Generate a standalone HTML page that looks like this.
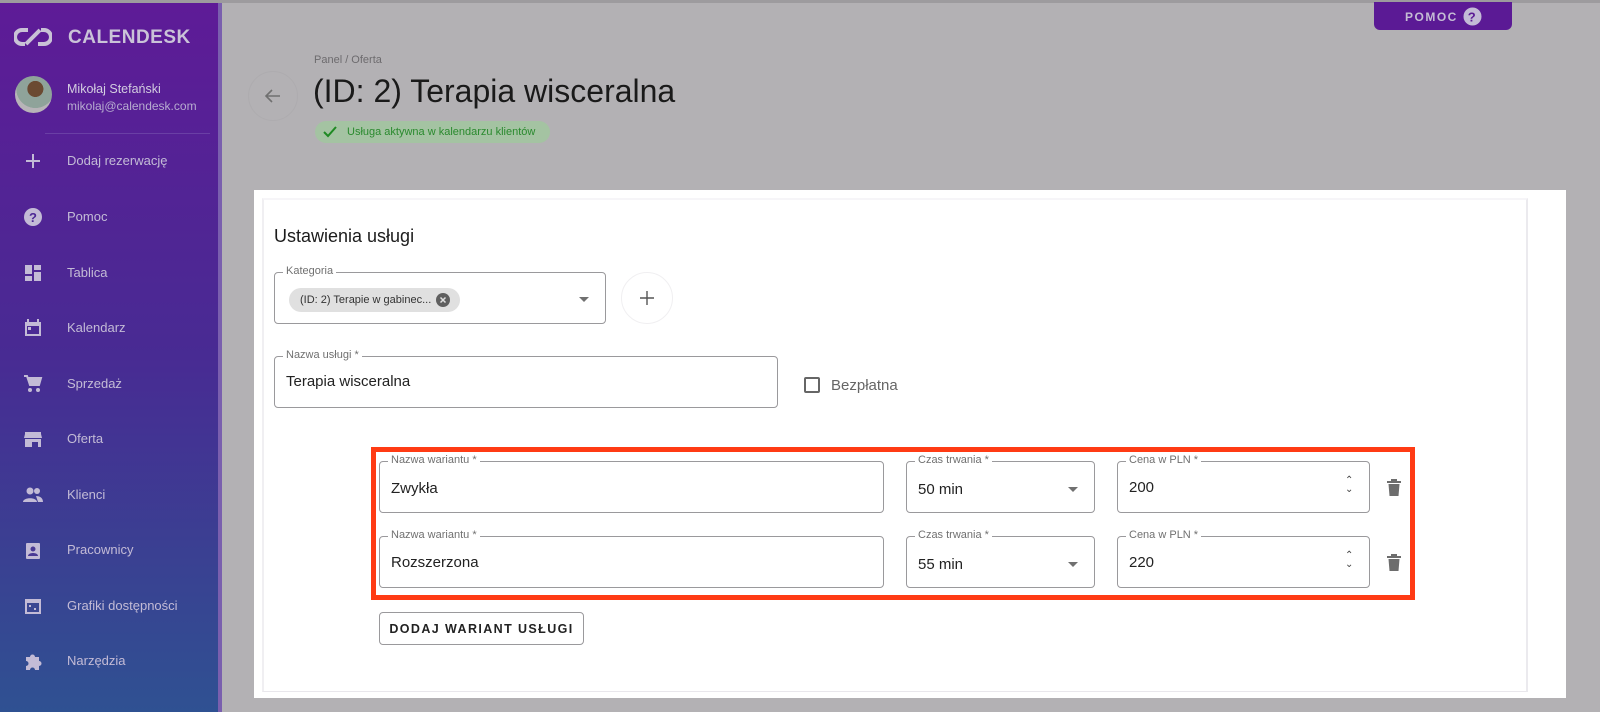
<!DOCTYPE html>
<html><head><meta charset="utf-8"><style>
*{box-sizing:border-box;margin:0;padding:0}
body{width:1600px;height:712px;overflow:hidden;background:#b3b1b4;font-family:"Liberation Sans",sans-serif;position:relative}
.abs{position:absolute}
.side{left:0;top:3px;width:222px;height:709px;background:linear-gradient(180deg,#5e1b97 0%,#482b93 50%,#2f5192 100%);border-right:4px solid #7a5fae}
.mi{position:absolute;left:0;width:220px;height:40px;color:#c3bbd6;font-size:13px}
.mi span{position:absolute;left:67px;top:12px}
.mi svg{position:absolute;left:23px;top:10px}
.f{position:absolute;border:1px solid #9a999c;border-radius:4px;background:#fff}
.f .l{position:absolute;top:-8px;left:8px;background:#fff;padding:0 3px;font-size:11px;color:#707070}
.f .v{position:absolute;left:11px;font-size:15px;color:#222}
.arr{position:absolute;width:0;height:0;border-left:5px solid transparent;border-right:5px solid transparent;border-top:5px solid #707070}
</style></head><body>
<div class="abs" style="left:0;top:0;width:1600px;height:3px;background:#9d9b9e"></div>
<div class="abs side">
 <svg class="abs" style="left:14px;top:24px" width="38" height="20" viewBox="0 0 38 20"><path d="M14 3H8a7 7 0 0 0 0 14h3M24 17h6a7 7 0 0 0 0-14h-3M12 17L26 3" fill="none" stroke="#c9c2d6" stroke-width="4"/></svg>
 <div class="abs" style="left:68px;top:24px;font-size:19px;font-weight:bold;color:#cac3d8;letter-spacing:0.5px">CALENDESK</div>
 <div class="abs" style="left:15px;top:73px;width:37px;height:37px;border-radius:50%;background:radial-gradient(circle at 55% 35%,#6b4a32 0 25%,#8fa39a 26% 60%,#b8b4b8 61%)"></div>
 <div class="abs" style="left:67px;top:79px;font-size:12.5px;color:#d3cde0">Mikołaj Stefański</div>
 <div class="abs" style="left:67px;top:96px;font-size:12px;color:#b7acd0">mikolaj@calendesk.com</div>
 <div class="abs" style="left:45px;top:130px;width:165px;height:1px;background:#6a3fa5"></div>
 <div class="mi" style="top:138px"><svg width="20" height="20"><path d="M10 3v14M3 10h14" stroke="#c3bbd6" stroke-width="2"/></svg><span>Dodaj rezerwację</span></div>
 <div class="mi" style="top:194px"><svg width="20" height="20"><circle cx="10" cy="10" r="9" fill="#c3bbd6"/><text x="10" y="15" font-size="13" font-weight="bold" text-anchor="middle" fill="#4c2895" font-family="Liberation Sans">?</text></svg><span>Pomoc</span></div>
 <div class="mi" style="top:250px"><svg width="20" height="20"><path d="M2 2h7v9H2zM11 2h7v5h-7zM11 9h7v9h-7zM2 13h7v5H2z" fill="#c3bbd6"/></svg><span>Tablica</span></div>
 <div class="mi" style="top:305px"><svg width="20" height="20"><path d="M2 4h16v14H2z" fill="#c3bbd6"/><path d="M5 1v4M15 1v4" stroke="#c3bbd6" stroke-width="2"/><path d="M4 8h12v8H4z" fill="#4a2a94"/><rect x="5" y="9" width="3" height="3" fill="#c3bbd6"/></svg><span>Kalendarz</span></div>
 <div class="mi" style="top:361px"><svg width="20" height="20"><path d="M1 2h3l3 9h9l2-7H5" fill="none" stroke="#c3bbd6" stroke-width="2"/><path d="M5 4h13l-2 7H7z" fill="#c3bbd6"/><circle cx="7" cy="16" r="2" fill="#c3bbd6"/><circle cx="15" cy="16" r="2" fill="#c3bbd6"/></svg><span>Sprzedaż</span></div>
 <div class="mi" style="top:416px"><svg width="20" height="20"><path d="M2 3h16v2l1 4H1l1-4zM2 10h16v8h-3v-5H9v5H2z" fill="#c3bbd6"/></svg><span>Oferta</span></div>
 <div class="mi" style="top:472px"><svg width="20" height="20"><circle cx="7" cy="6" r="3.5" fill="#c3bbd6"/><circle cx="14" cy="6" r="3" fill="#c3bbd6"/><path d="M0 17c0-5 14-5 14 0zM13 11c4 0 7 2 7 6h-5" fill="#c3bbd6"/></svg><span>Klienci</span></div>
 <div class="mi" style="top:527px"><svg width="20" height="20"><rect x="3" y="3" width="14" height="16" rx="1" fill="#c3bbd6"/><circle cx="10" cy="9" r="2.5" fill="#4a3994"/><path d="M5 16c0-4 10-4 10 0z" fill="#4a3994"/></svg><span>Pracownicy</span></div>
 <div class="mi" style="top:583px"><svg width="20" height="20"><rect x="2" y="3" width="16" height="15" fill="#c3bbd6"/><rect x="4" y="7" width="12" height="9" fill="#3c4793"/><rect x="6" y="9" width="2" height="2" fill="#c3bbd6"/><rect x="11" y="12" width="2" height="2" fill="#c3bbd6"/></svg><span>Grafiki dostępności</span></div>
 <div class="mi" style="top:638px"><svg width="20" height="20"><path d="M3 6h4a2.5 2.5 0 0 1 5 0h4v4a2.5 2.5 0 0 1 0 5v4h-4a2.5 2.5 0 0 0-5 0H3v-4a2.5 2.5 0 0 0 0-5z" fill="#c3bbd6"/></svg><span>Narzędzia</span></div>
</div>
<div class="abs" style="left:1374px;top:2px;width:138px;height:28px;background:#5b1a95;border-radius:0 0 6px 6px;color:#c4bcd4;font-size:12px;font-weight:bold;letter-spacing:1.5px">
 <span class="abs" style="left:31px;top:8px">POMOC</span>
 <svg class="abs" style="left:89px;top:5px" width="19" height="19"><circle cx="9.5" cy="9.5" r="9" fill="#c3bbd6"/><text x="9.5" y="14.5" font-size="13" font-weight="bold" text-anchor="middle" fill="#5b1a95" font-family="Liberation Sans">?</text></svg>
</div>
<div class="abs" style="left:248px;top:71px;width:50px;height:50px;border-radius:50%;border:1px solid #aeacaf"></div>
<svg class="abs" style="left:264px;top:88px" width="18" height="16"><path d="M16 8H2M8 2L2 8l6 6" fill="none" stroke="#707070" stroke-width="1.6"/></svg>
<div class="abs" style="left:314px;top:54px;font-size:11px;color:#6d6b6e">Panel / Oferta</div>
<div class="abs" style="left:313px;top:73px;font-size:32px;color:#1a1a1a">(ID: 2) Terapia wisceralna</div>
<div class="abs" style="left:315px;top:121px;width:235px;height:22px;border-radius:11px;background:#a4c3a2"></div>
<svg class="abs" style="left:322px;top:124px" width="16" height="16"><path d="M2 8l4 4 8-9" fill="none" stroke="#1f8a23" stroke-width="2"/></svg>
<div class="abs" style="left:347px;top:126px;font-size:11px;color:#2a8a2e">Usługa aktywna w kalendarzu klientów</div>
<div class="abs" style="left:254px;top:190px;width:1312px;height:508px;background:#fff"></div>
<div class="abs" style="left:262px;top:198px;width:1266px;height:494px;border-left:2px solid #f0eff2;border-right:2px solid #ebeaee;border-top:2px solid #f6f5f8;border-bottom:1px solid #e9e7ec"></div>
<div class="abs" style="left:274px;top:226px;font-size:18px;color:#1c1c1c">Ustawienia usługi</div>
<div class="f" style="left:274px;top:272px;width:332px;height:52px"><div class="l">Kategoria</div>
 <div class="abs" style="left:14px;top:15px;width:171px;height:24px;border-radius:12px;background:#e0e0e0;font-size:11px;color:#333;padding:6px 0 0 11px">(ID: 2) Terapie w gabinec...</div>
 <svg class="abs" style="left:161px;top:20px" width="14" height="14"><circle cx="7" cy="7" r="7" fill="#5f5f5f"/><path d="M4.5 4.5l5 5M9.5 4.5l-5 5" stroke="#e0e0e0" stroke-width="1.5"/></svg>
 <div class="arr" style="left:304px;top:24px"></div></div>
<div class="abs" style="left:621px;top:272px;width:52px;height:52px;border-radius:50%;border:1px solid #f0eff1"></div>
<svg class="abs" style="left:639px;top:290px" width="16" height="16"><path d="M8 1v14M1 8h14" stroke="#555" stroke-width="1.4"/></svg>
<div class="f" style="left:274px;top:356px;width:504px;height:52px"><div class="l">Nazwa usługi *</div><div class="v" style="top:16px">Terapia wisceralna</div></div>
<div class="abs" style="left:804px;top:377px;width:16px;height:16px;border:2px solid #666;border-radius:2px"></div>
<div class="abs" style="left:831px;top:377px;font-size:15px;color:#666">Bezpłatna</div>
<div class="abs" style="left:371px;top:447px;width:1044px;height:153px;border:5px solid #ff3b14"></div>
<div class="f" style="left:379px;top:461px;width:505px;height:52px"><div class="l">Nazwa wariantu *</div><div class="v" style="top:18px">Zwykła</div></div>
<div class="f" style="left:906px;top:461px;width:189px;height:52px"><div class="l">Czas trwania *</div><div class="v" style="top:19px">50 min</div><div class="arr" style="left:161px;top:25px"></div></div>
<div class="f" style="left:1117px;top:461px;width:253px;height:52px"><div class="l">Cena w PLN *</div><div class="v" style="top:17px">200</div><div class="abs" style="left:227px;top:14px;font-size:10px;color:#444;line-height:9px">&#8963;<br>&#8964;</div></div>
<div class="f" style="left:379px;top:536px;width:505px;height:52px"><div class="l">Nazwa wariantu *</div><div class="v" style="top:17px">Rozszerzona</div></div>
<div class="f" style="left:906px;top:536px;width:189px;height:52px"><div class="l">Czas trwania *</div><div class="v" style="top:19px">55 min</div><div class="arr" style="left:161px;top:25px"></div></div>
<div class="f" style="left:1117px;top:536px;width:253px;height:52px"><div class="l">Cena w PLN *</div><div class="v" style="top:17px">220</div><div class="abs" style="left:227px;top:14px;font-size:10px;color:#444;line-height:9px">&#8963;<br>&#8964;</div></div>
<svg class="abs" style="left:1386px;top:478px" width="16" height="18"><path d="M1 3h14v2H1zM5 1h6v2H5zM2.5 6h11l-1 12h-9z" fill="#6d6d6d"/></svg>
<svg class="abs" style="left:1386px;top:553px" width="16" height="18"><path d="M1 3h14v2H1zM5 1h6v2H5zM2.5 6h11l-1 12h-9z" fill="#6d6d6d"/></svg>
<div class="abs" style="left:379px;top:612px;width:205px;height:33px;border:1px solid #9a999c;border-radius:4px;font-size:12.5px;font-weight:bold;letter-spacing:1.4px;color:#222;text-align:center;padding-top:9px">DODAJ WARIANT USŁUGI</div>
</body></html>
